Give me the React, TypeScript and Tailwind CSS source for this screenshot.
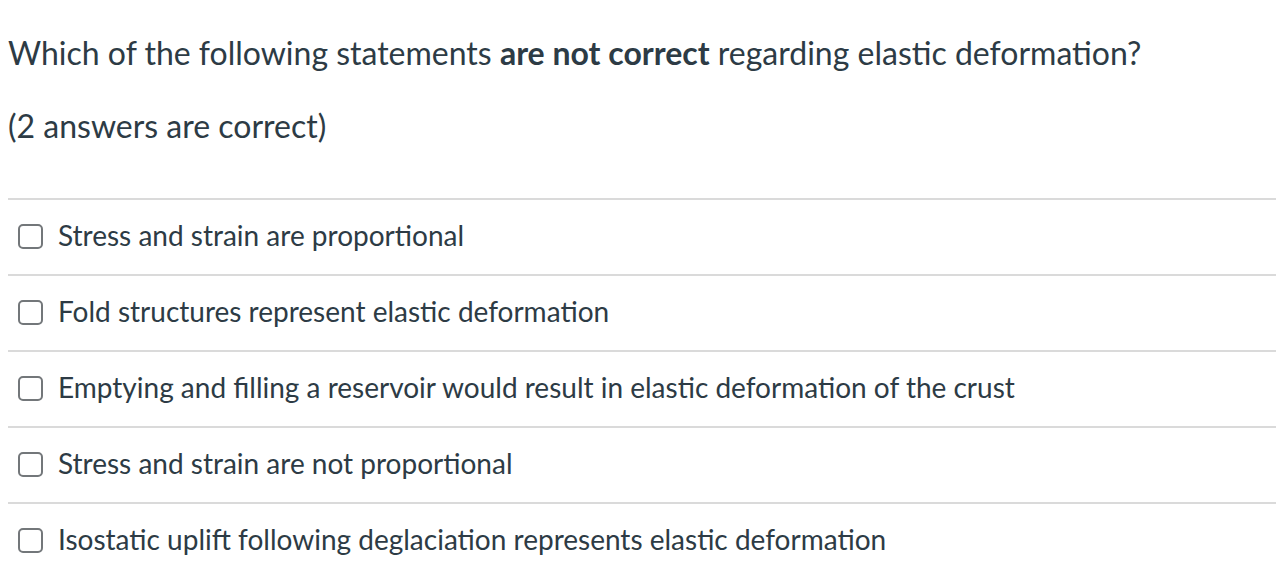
const options = [
  'Stress and strain are proportional',
  'Fold structures represent elastic deformation',
  'Emptying and filling a reservoir would result in elastic deformation of the crust',
  'Stress and strain are not proportional',
  'Isostatic uplift following deglaciation represents elastic deformation',
];

export default function App() {
  return (
    <div className="min-h-screen bg-white pl-[8px] pt-[31px] text-[#2d3b45] font-['Lato','Liberation_Sans',sans-serif]">
      <p className="text-[32px] leading-[44px]">
        Which of the following statements <strong className="font-bold">are not correct</strong> regarding elastic deformation?
      </p>
      <p className="mt-[29px] text-[32px] leading-[44px]">(2 answers are correct)</p>
      <div className="mt-[50px]">
        {options.map((text) => (
          <div key={text} className="border-t-2 border-[#dadada]">
            <label className="flex h-[74px] items-center pb-[2px]">
              <span className="ml-[10px] mr-[15px] h-[25px] w-[25px] shrink-0 rounded-[5px] border-2 border-[#73777a] bg-white" />
              <span className="-mt-[3px] text-[28px] leading-[36px]">{text}</span>
            </label>
          </div>
        ))}
      </div>
    </div>
  );
}
